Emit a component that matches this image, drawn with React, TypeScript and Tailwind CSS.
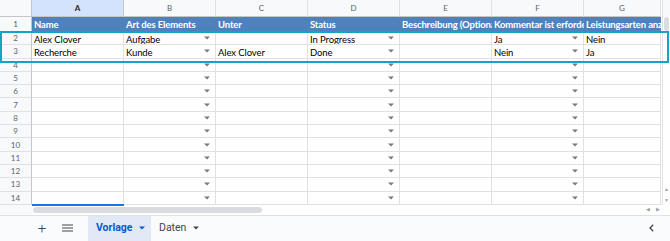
import React from "react";

const cols = ["A", "B", "C", "D", "E", "F", "G"];
const widths = ["w-[92px]", "w-[92px]", "w-[92px]", "w-[92px]", "w-[92px]", "w-[92px]", "w-[77px]"];
const dropdownCols = [1, 3, 5];

const headers = [
  "Name",
  "Art des Elements",
  "Unter",
  "Status",
  "Beschreibung (Optional)",
  "Kommentar ist erforderlich",
  "Leistungsarten anzeigen",
];

const data: string[][] = [
  ["Alex Clover", "Aufgabe", "", "In Progress", "", "Ja", "Nein"],
  ["Recherche", "Kunde", "Alex Clover", "Done", "", "Nein", "Ja"],
];

function Arrow() {
  return (
    <svg width="6" height="4" viewBox="0 0 6 4" className="absolute right-[5px] top-1/2 -translate-y-1/2">
      <path d="M0 0.5h6L3 3.5z" fill="#7a7a7a" />
    </svg>
  );
}

function Row({ n, cells }: { n: number; cells: string[] }) {
  return (
    <div className="flex h-[13.3px]">
      <div className="flex w-[32px] shrink-0 items-center justify-center border-r border-b border-r-[#c4c7c5] border-b-[#e1e1e1] bg-[#f8f9fa] text-[8px] text-[#5f6368]">
        {n}
      </div>
      {cols.map((_, i) => (
        <div
          key={i}
          className={`relative ${widths[i]} shrink-0 overflow-hidden whitespace-nowrap border-r border-b border-[#e1e1e1] pt-[1px] pl-[2px] text-[9.5px] leading-[13px] tracking-[-0.1px] text-black`}
        >
          {cells[i]}
          {dropdownCols.includes(i) && <Arrow />}
        </div>
      ))}
    </div>
  );
}

export default function App() {
  const rows = Array.from({ length: 13 }, (_, i) => i + 2);
  return (
    <div className="relative h-[241px] w-[670px] overflow-hidden bg-white" style={{ fontFamily: "Lato, 'Open Sans', sans-serif" }}>
      <div className="flex">
        <div className="w-[662px]">
          {/* column letters */}
          <div className="flex h-[17px]">
            <div className="w-[32px] shrink-0 border-r border-b border-[#c4c7c5] bg-[#f8f9fa]" />
            {cols.map((c, i) => (
              <div
                key={c}
                className={`flex ${widths[i]} shrink-0 items-center justify-center border-r border-b text-[8px] ${
                  i === 0
                    ? "border-[#c4c7c5] bg-[#d3e3fd] font-bold text-[#1f1f1f]"
                    : "border-[#c4c7c5] border-r-[#e1e1e1] bg-[#f8f9fa] text-[#5f6368]"
                }`}
              >
                {c}
              </div>
            ))}
          </div>
          {/* header row */}
          <div className="flex h-[15px]">
            <div className="flex w-[32px] shrink-0 items-center justify-center border-r border-b border-r-[#c4c7c5] border-b-[#e1e1e1] bg-[#f8f9fa] text-[8px] text-[#5f6368]">
              1
            </div>
            {headers.map((h, i) => (
              <div
                key={h}
                className={`${widths[i]} shrink-0 overflow-hidden whitespace-nowrap bg-[#4f81bd] pl-[2px] text-[9.5px] font-bold leading-[15px] tracking-[-0.15px] text-white`}
              >
                {h}
              </div>
            ))}
          </div>
          {rows.map((n) => (
            <Row key={n} n={n} cells={data[n - 2] ?? []} />
          ))}
        </div>
        {/* vertical scrollbar */}
        <div className="flex w-[8px] flex-col border-l border-[#e1e1e1] bg-white">
          <div className="h-[17px] bg-[#f8f9fa]" />
          <div className="mx-[1px] h-[14px] rounded-sm bg-[#dadce0]" />
          <div className="flex-1" />
          <div className="flex flex-col items-center gap-[6px] pb-[2px] text-[5px] leading-[5px] text-[#9aa0a6]">
            <span>▲</span>
            <span>▼</span>
          </div>
        </div>
      </div>

      {/* horizontal scrollbar */}
      <div className="flex h-[11px] items-center border-b border-[#e1e1e1]">
        <div className="h-full w-[32px] bg-[#f8f9fa]" />
        <div className="ml-[1px] h-[6px] w-[229px] rounded-full bg-[#dadce0]" />
        <div className="flex-1" />
        <div className="mr-[10px] flex gap-[6px] text-[5px] text-[#9aa0a6]">
          <span>◀</span>
          <span>▶</span>
        </div>
      </div>

      {/* tab bar */}
      <div className="flex h-[25px] items-stretch bg-[#f9fbfd] text-[10.5px]" style={{ fontFamily: "Roboto, sans-serif" }}>
        <div className="ml-[36px] flex w-[12px] items-center justify-center text-[15px] font-light text-[#444746]">+</div>
        <div className="ml-[14px] flex items-center">
          <svg width="11" height="8" viewBox="0 0 11 8">
            <path d="M0 1h11M0 4h11M0 7h11" stroke="#444746" strokeWidth="1.2" />
          </svg>
        </div>
        <div className="ml-[15px] flex w-[63px] items-center bg-[#e1e9f7] pl-[8px] font-bold text-[#0b57d0]">
          Vorlage
          <svg width="6" height="4" viewBox="0 0 6 4" className="ml-[7px]">
            <path d="M0 0.5h6L3 3.5z" fill="#0b57d0" />
          </svg>
        </div>
        <div className="ml-[8px] flex items-center text-[#444746]">
          Daten
          <svg width="6" height="4" viewBox="0 0 6 4" className="ml-[7px]">
            <path d="M0 0.5h6L3 3.5z" fill="#444746" />
          </svg>
        </div>
        <div className="flex-1" />
        <div className="mr-[16px] flex items-center">
          <svg width="5" height="8" viewBox="0 0 5 8">
            <path d="M4.2 0.8L1 4l3.2 3.2" stroke="#444746" strokeWidth="1.3" fill="none" />
          </svg>
        </div>
      </div>

      {/* active cell edge */}
      <div className="absolute left-[32px] top-[204px] h-[2px] w-[92px] bg-[#1a73e8]" />
      {/* selection outline rows 2-3 */}
      <div className="absolute left-0 top-[31px] h-[32px] w-[669px] border-2 border-[#12a4c2]" />
    </div>
  );
}
